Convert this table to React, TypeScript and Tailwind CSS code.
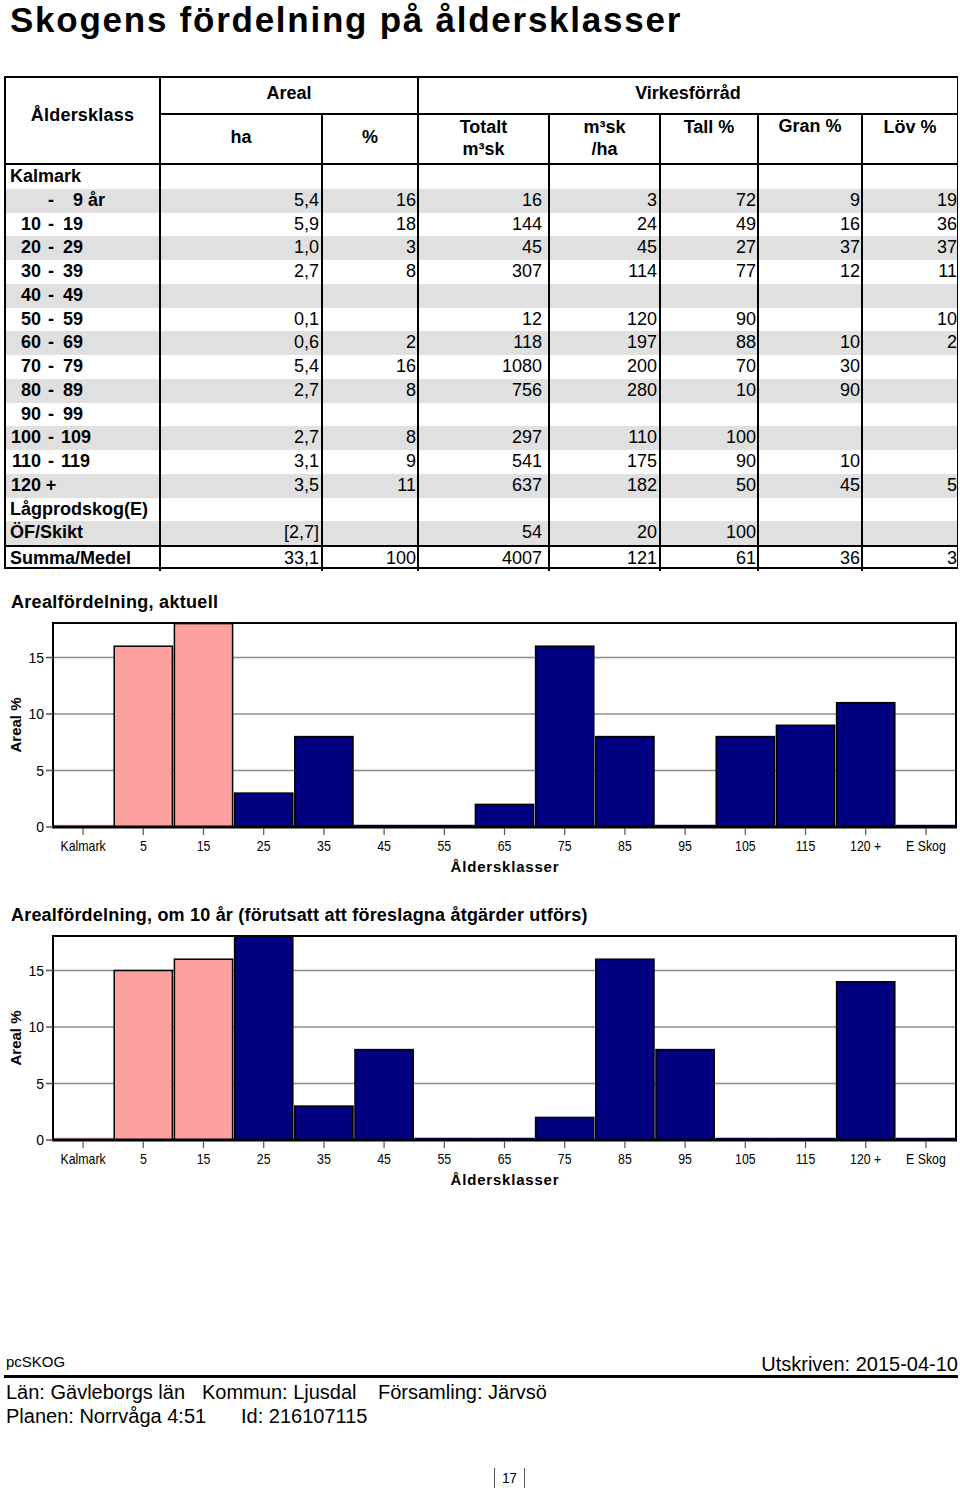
import React from "react";

type Label =
  | { kind: "text"; text: string }
  | { kind: "range"; a: string; sep: string; b: string; suffix?: string };

const rows: { label: Label; vals: string[] }[] = [
  { label: { kind: "text", text: "Kalmark" }, vals: ["", "", "", "", "", "", ""] },
  { label: { kind: "range", a: "", sep: "-", b: "9", suffix: " år" }, vals: ["5,4", "16", "16", "3", "72", "9", "19"] },
  { label: { kind: "range", a: "10", sep: "-", b: "19" }, vals: ["5,9", "18", "144", "24", "49", "16", "36"] },
  { label: { kind: "range", a: "20", sep: "-", b: "29" }, vals: ["1,0", "3", "45", "45", "27", "37", "37"] },
  { label: { kind: "range", a: "30", sep: "-", b: "39" }, vals: ["2,7", "8", "307", "114", "77", "12", "11"] },
  { label: { kind: "range", a: "40", sep: "-", b: "49" }, vals: ["", "", "", "", "", "", ""] },
  { label: { kind: "range", a: "50", sep: "-", b: "59" }, vals: ["0,1", "", "12", "120", "90", "", "10"] },
  { label: { kind: "range", a: "60", sep: "-", b: "69" }, vals: ["0,6", "2", "118", "197", "88", "10", "2"] },
  { label: { kind: "range", a: "70", sep: "-", b: "79" }, vals: ["5,4", "16", "1080", "200", "70", "30", ""] },
  { label: { kind: "range", a: "80", sep: "-", b: "89" }, vals: ["2,7", "8", "756", "280", "10", "90", ""] },
  { label: { kind: "range", a: "90", sep: "-", b: "99" }, vals: ["", "", "", "", "", "", ""] },
  { label: { kind: "range", a: "100", sep: "-", b: "109" }, vals: ["2,7", "8", "297", "110", "100", "", ""] },
  { label: { kind: "range", a: "110", sep: "-", b: "119" }, vals: ["3,1", "9", "541", "175", "90", "10", ""] },
  { label: { kind: "range", a: "120", sep: "+", b: "" }, vals: ["3,5", "11", "637", "182", "50", "45", "5"] },
  { label: { kind: "text", text: "Lågprodskog(E)" }, vals: ["", "", "", "", "", "", ""] },
  { label: { kind: "text", text: "ÖF/Skikt" }, vals: ["[2,7]", "", "54", "20", "100", "", ""] },
];

const summa = ["33,1", "100", "4007", "121", "61", "36", "3"];

const COLS = "grid grid-cols-[155px_162px_96px_131px_111px_98px_104px_94px]";
const PR = ["pr-[2px]", "pr-[1px]", "pr-[6px]", "pr-[2px]", "pr-[1px]", "pr-[1px]", "pr-0"];

function LabelCell({ label }: { label: Label }) {
  if (label.kind === "text") {
    return <div className="pl-[4px] font-bold whitespace-pre">{label.text}</div>;
  }
  return (
    <div className="flex font-bold whitespace-pre">
      <span className="w-[35px] text-right">{label.a}</span>
      <span className="w-[20px] text-center">{label.sep}</span>
      <span className="w-[22px] text-right">{label.b}</span>
      {label.suffix ? <span>{label.suffix}</span> : null}
    </div>
  );
}

function DataRow({ label, vals, gray, last }: { label: React.ReactNode; vals: string[]; gray: boolean; last?: boolean }) {
  return (
    <div
      className={`${COLS} ${last ? "h-[22px] border-t-2 border-black" : "h-[23.75px]"} ${
        gray ? "bg-[#e0e0e0]" : "bg-white"
      }`}
    >
      <div className="border-r-2 border-black flex items-center pb-[2px]">{label}</div>
      {vals.map((v, i) => (
        <div
          key={i}
          className={`${i < 6 ? "border-r-2 border-black" : ""} flex items-center justify-end pb-[2px] ${PR[i]}`}
        >
          {v}
        </div>
      ))}
    </div>
  );
}

function Table() {
  return (
    <div className="ml-[4px] w-[954px] border-l-2 border-t-2 border-b-2 border-r border-black text-[18px] leading-[22px]">
      <div className={`${COLS} grid-rows-[37px_50px] font-bold`}>
        <div className="row-span-2 border-r-2 border-b-2 border-black flex items-center justify-center pb-[12px] tracking-[0.2px]">
          Åldersklass
        </div>
        <div className="col-span-2 border-r-2 border-b-2 border-black flex items-center justify-center pb-[6px]">
          Areal
        </div>
        <div className="col-span-5 border-b-2 border-black flex items-center justify-center pb-[6px]">
          Virkesförråd
        </div>
        <div className="border-r-2 border-b-2 border-black flex items-center justify-center pb-[4px]">ha</div>
        <div className="border-r-2 border-b-2 border-black flex items-center justify-center pb-[4px]">%</div>
        <div className="border-r-2 border-b-2 border-black flex flex-col items-center pt-[1px]">
          <span>Totalt</span>
          <span>m³sk</span>
        </div>
        <div className="border-r-2 border-b-2 border-black flex flex-col items-center pt-[1px]">
          <span>m³sk</span>
          <span>/ha</span>
        </div>
        <div className="border-r-2 border-b-2 border-black flex flex-col items-center pt-[1px]">
          <span>Tall %</span>
        </div>
        <div className="border-r-2 border-b-2 border-black flex flex-col items-center">
          <span>Gran %</span>
        </div>
        <div className="border-b-2 border-black flex flex-col items-center pt-[1px]">
          <span>Löv %</span>
        </div>
      </div>
      {rows.map((r, i) => (
        <DataRow key={i} label={<LabelCell label={r.label} />} vals={r.vals} gray={i % 2 === 1} />
      ))}
      <DataRow label={<LabelCell label={{ kind: "text", text: "Summa/Medel" }} />} vals={summa} gray={false} last />
    </div>
  );
}

const CATS = ["Kalmark", "5", "15", "25", "35", "45", "55", "65", "75", "85", "95", "105", "115", "120 +", "E Skog"];
const X0 = 53;
const X1 = 956;
const CW = (X1 - X0) / 15;
const T = 10;
const B = 214;
const U = 11.3;
const PINK = "#ffa0a0";
const NAVY = "#000080";

function Chart({ values }: { values: number[] }) {
  return (
    <svg width={960} height={270} className="block" style={{ fontFamily: "'Liberation Sans', Arial, sans-serif" }}>
      {[5, 10, 15].map((v) => (
        <line key={v} x1={X0} x2={X1} y1={B - v * U} y2={B - v * U} stroke="#8c8c8c" strokeWidth={1.5} />
      ))}
      {values.map((v, i) => {
        const color = i < 3 ? PINK : NAVY;
        const x = X0 + i * CW;
        if (v <= 0) {
          return <line key={i} x1={x} x2={x + CW} y1={B - 1.5} y2={B - 1.5} stroke={color} strokeWidth={1.5} />;
        }
        const h = Math.min(v * U, B - T);
        return (
          <rect key={i} x={x + 1} y={B - h} width={CW - 2} height={h} fill={color} stroke="#000" strokeWidth={1.5} />
        );
      })}
      <rect x={X0} y={T} width={X1 - X0} height={B - T} fill="none" stroke="#000" strokeWidth={2} />
      <line x1={X0 - 1} x2={X1 + 1} y1={B} y2={B} stroke="#000" strokeWidth={3} />
      {[0, 5, 10, 15].map((v) => (
        <g key={v}>
          <line x1={46} x2={X0} y1={B - v * U} y2={B - v * U} stroke="#555" strokeWidth={1.5} />
          <text x={44} y={B - v * U + 5} textAnchor="end" fontSize={14} fill="#000">
            {v}
          </text>
        </g>
      ))}
      {CATS.map((c, i) => {
        const cx = X0 + CW * (i + 0.5);
        return (
          <g key={c}>
            <line x1={cx} x2={cx} y1={B + 1} y2={B + 8} stroke="#555" strokeWidth={1.2} />
            <text
              transform={`translate(${cx},${B + 24}) scale(0.88,1)`}
              textAnchor="middle"
              fontSize={14}
              fill="#000"
            >
              {c}
            </text>
          </g>
        );
      })}
      <text transform="translate(21,112) rotate(-90)" textAnchor="middle" fontSize={15} fontWeight="bold" fill="#000">
        Areal %
      </text>
      <text x={505} y={259} textAnchor="middle" fontSize={15} fontWeight="bold" letterSpacing={0.8} fill="#000">
        Åldersklasser
      </text>
    </svg>
  );
}

export default function App() {
  return (
    <div className="w-[960px] h-[1491px] bg-white text-black font-['Liberation_Sans',Arial,sans-serif] overflow-hidden">
      <h1 className="h-[38px] pl-[10px] text-[35px] leading-[39px] tracking-[1.75px] font-bold whitespace-nowrap">
        Skogens fördelning på åldersklasser
      </h1>
      <div className="mt-[38px]">
        <Table />
      </div>

      <div className="mt-[22px] pl-[11px] text-[18px] leading-[22px] font-bold tracking-[0.3px]">
        Arealfördelning, aktuell
      </div>
      <Chart values={[0, 16, 18, 3, 8, 0, 0, 2, 16, 8, 0, 8, 9, 11, 0]} />

      <div className="mt-[21px] pl-[11px] text-[18px] leading-[22px] font-bold tracking-[0.2px]">
        Arealfördelning, om 10 år (förutsatt att föreslagna åtgärder utförs)
      </div>
      <Chart values={[0, 15, 16, 19, 3, 8, 0, 0, 2, 16, 8, 0, 0, 14, 0]} />

      <div className="mt-[157px] ml-[4px] mr-[2px]">
        <div className="flex items-start justify-between border-b-[3px] border-black">
          <span className="pl-[2px] text-[15px] leading-[18px]">pcSKOG</span>
          <span className="text-[20px] leading-[22px]">Utskriven: 2015-04-10</span>
        </div>
        <div className="mt-[2px] pl-[2px] text-[20px] leading-[24px]">
          <div className="flex whitespace-nowrap">
            <span className="w-[196px]">Län: Gävleborgs län</span>
            <span className="w-[176px]">Kommun: Ljusdal</span>
            <span>Församling: Järvsö</span>
          </div>
          <div className="flex whitespace-nowrap">
            <span className="w-[235px]">Planen: Norrvåga 4:51</span>
            <span>Id: 216107115</span>
          </div>
        </div>
      </div>

      <div className="mt-[40px] ml-[494px] w-fit h-[20px] flex items-center border-l border-r border-[#555] px-[7px] text-[14px] leading-[20px] tracking-[-0.5px]">
        17
      </div>
    </div>
  );
}
